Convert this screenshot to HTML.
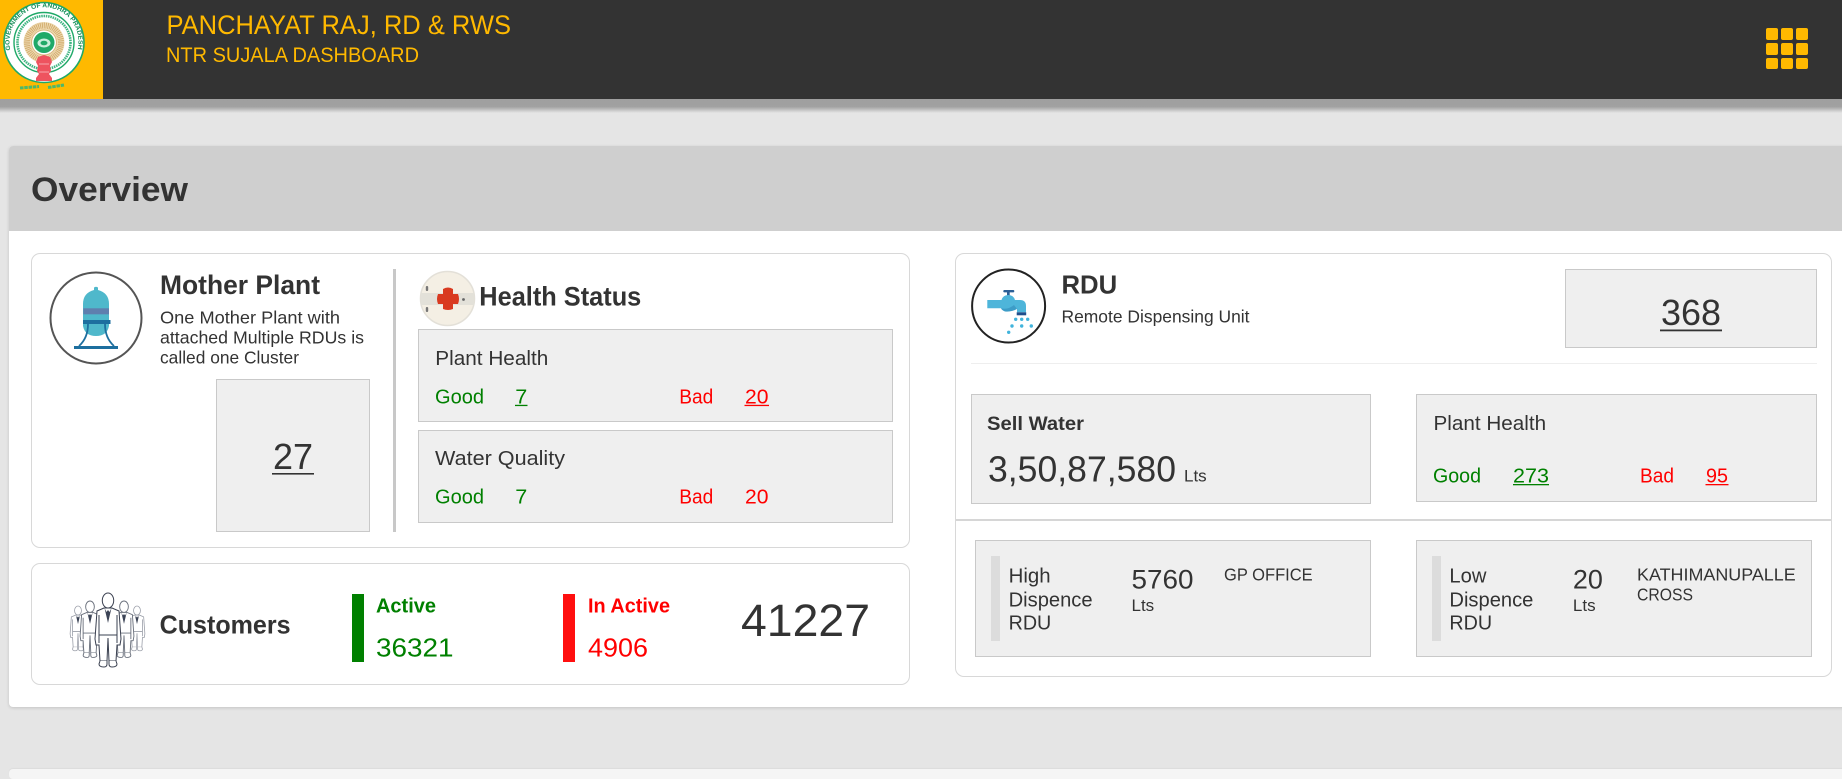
<!DOCTYPE html>
<html lang="en">
<head>
<meta charset="utf-8">
<title>NTR Sujala Dashboard</title>
<style>
html,body{margin:0;padding:0;width:1842px;height:774px;overflow:hidden;background:#e5e5e5;font-family:"Liberation Sans",sans-serif;color:#333}
.a{position:absolute;box-sizing:border-box}
.card{background:#fff;border:1.5px solid #d8d8d8;border-radius:9px}
.box{background:#efefef;border:1.5px solid #c9c9c9}
svg{position:absolute;left:0;top:0}
text{font-family:"Liberation Sans",sans-serif;fill:#333}
.b{font-weight:bold}
.g{fill:#008000}
.r{fill:#ff0000}
.o{fill:#ffb900}
</style>
</head>
<body>
<div class="a" style="left:0;top:99px;width:1842px;height:14px;background:linear-gradient(#9f9f9f 0,#a1a1a1 55%,#e5e5e5 100%)"></div>
<div class="a" style="left:0;top:0;width:1842px;height:99px;background:#333"></div>
<div class="a" style="left:0;top:0;width:103px;height:99px;background:#ffb900"></div>

<div class="a" style="left:9px;top:146px;width:1840px;height:561px;background:#fff;border-radius:4px;box-shadow:0 1px 3px rgba(0,0,0,.15)"></div>
<div class="a" style="left:9px;top:146px;width:1840px;height:85px;background:#cfcfcf;border-radius:4px 4px 0 0"></div>
<div class="a" style="left:9px;top:769px;width:1840px;height:10px;background:#f5f5f5;border-radius:4px;box-shadow:0 -1px 1px rgba(0,0,0,.04)"></div>

<div class="a card" style="left:31px;top:253px;width:879px;height:295px"></div>
<div class="a box" style="left:216px;top:379px;width:154px;height:153px"></div>
<div class="a" style="left:393px;top:269px;width:3px;height:263px;background:#c8c8c8"></div>
<div class="a box" style="left:418px;top:329px;width:475px;height:93px"></div>
<div class="a box" style="left:418px;top:430px;width:475px;height:93px"></div>

<div class="a card" style="left:31px;top:563px;width:879px;height:122px"></div>
<div class="a" style="left:352px;top:594px;width:12px;height:68px;background:#008000"></div>
<div class="a" style="left:563px;top:594px;width:12px;height:68px;background:#ff0f0f"></div>

<div class="a card" style="left:955px;top:253px;width:877px;height:424px"></div>
<div class="a box" style="left:1565px;top:269px;width:252px;height:79px"></div>
<div class="a" style="left:971px;top:363px;width:846px;height:1px;background:#eee"></div>
<div class="a box" style="left:971px;top:394px;width:400px;height:110px"></div>
<div class="a box" style="left:1416px;top:394px;width:401px;height:108px"></div>
<div class="a" style="left:956px;top:519px;width:875px;height:2px;background:#d6d6d6"></div>
<div class="a box" style="left:975px;top:540px;width:396px;height:117px"></div>
<div class="a" style="left:991px;top:556px;width:9px;height:85px;background:#dcdcdc"></div>
<div class="a box" style="left:1416px;top:540px;width:396px;height:117px"></div>
<div class="a" style="left:1432px;top:556px;width:9px;height:85px;background:#dcdcdc"></div>

<svg width="1842" height="774" viewBox="0 0 1842 774">
<defs>
<symbol id="man" viewBox="-14 0 28 76" overflow="visible">
<ellipse cx="0" cy="7.5" rx="5.7" ry="7.5" fill="#fff"/>
<path fill="#fff" d="M-4 15 L-11 18 L-13 46 L-12 52 L-9 52 L-8 68 L-1 68 L0 45 L1 68 L8 68 L9 52 L12 52 L13 46 L11 18 L4 15 Z"/>
<path fill="none" d="M-9 22 L-9 50 M9 22 L9 50 M-8.500 42 H8.500"/>
<path fill="#3c4456" stroke="none" d="M-3.500 15 L0 30 L3.500 15 L1.500 19 L0 17 L-1.500 19 Z"/>
<path fill="#fff" d="M-8 68 L-9 71 Q-9 74 -4 74 Q-1 74 -1 71 L-1 68 M8 68 L9 71 Q9 74 4 74 Q1 74 1 71 L1 68"/>
</symbol>
<path id="ringtextb" fill="none" d="M10.500 50 A34.500 34.500 0 1 1 77.500 50"/>
</defs>

<!-- logo -->
<circle cx="44" cy="42.500" r="40" fill="#fff" stroke="#1fa968" stroke-width="1.600"/>
<text font-size="6.200" font-weight="bold" style="fill:#178f58"><textPath href="#ringtextb" textLength="124" lengthAdjust="spacingAndGlyphs">GOVERNMENT OF ANDHRA PRADESH</textPath></text>
<circle cx="44" cy="42.500" r="30" fill="#fff" stroke="#1fa968" stroke-width="1.400"/>
<circle cx="44" cy="42.500" r="26.500" fill="none" stroke="#3fb582" stroke-width="2.600" stroke-dasharray="1.500 .8"/>
<circle cx="44" cy="42.500" r="20.500" fill="#efdcb4"/>
<circle cx="44" cy="42.500" r="17" fill="none" stroke="#d3ad70" stroke-width="6" stroke-dasharray="1 .9"/>
<circle cx="44" cy="42.500" r="12.500" fill="#fff" stroke="#d9b77f" stroke-width="1"/>
<circle cx="44" cy="42.500" r="10.500" fill="#1fa968"/>
<ellipse cx="44" cy="43" rx="6.500" ry="4.500" fill="#c9eedb"/>
<ellipse cx="44" cy="43" rx="3.500" ry="2.300" fill="#1fa968"/>
<path fill="#ee535f" d="M44 55 L50 57 L52 62 L50 66 L51 71 L49 74 L52 78 L52 81 L36 81 L36 78 L39 74 L37 71 L38 66 L36 62 L38 57 Z"/>
<path fill="none" stroke="#f9c3c6" stroke-width=".7" d="M39 64 H49 M39 72 H49"/>
<path fill="none" stroke="#4db86a" stroke-width="3" stroke-dasharray="3.500 .8" d="M20 88 L39 86.500 M48 87.500 L64 85"/>

<!-- header -->
<text x="166.500" y="34" font-size="27" class="o" textLength="344.500" lengthAdjust="spacingAndGlyphs">PANCHAYAT RAJ, RD &amp; RWS</text>
<text x="166" y="62" font-size="20.800" class="o" textLength="253" lengthAdjust="spacingAndGlyphs">NTR SUJALA DASHBOARD</text>
<g fill="#ffb900">
<rect x="1766" y="28" width="12" height="12" rx="2"/><rect x="1781" y="28" width="12" height="12" rx="2"/><rect x="1796" y="28" width="12" height="12" rx="2"/>
<rect x="1766" y="43" width="12" height="12" rx="2"/><rect x="1781" y="43" width="12" height="12" rx="2"/><rect x="1796" y="43" width="12" height="12" rx="2"/>
<rect x="1766" y="58" width="12" height="11" rx="2"/><rect x="1781" y="58" width="12" height="11" rx="2"/><rect x="1796" y="58" width="12" height="11" rx="2"/>
</g>

<text x="31" y="201" font-size="34" class="b" textLength="157" lengthAdjust="spacingAndGlyphs">Overview</text>

<!-- mother plant icon -->
<circle cx="96" cy="318" r="45.500" fill="#fff" stroke="#555" stroke-width="2"/>
<path fill="#4fb8cb" d="M94 290 V287.500 Q96 286 98 287.500 V290 Q109 293 109 304 V326 Q107 336 96 336 Q85 336 83 326 V304 Q83 293 94 290 Z"/>
<rect x="83.300" y="308.300" width="25.700" height="6" fill="#5f7fae"/>
<rect x="83" y="320" width="27.500" height="4" fill="#1d6f9f"/>
<path fill="none" stroke="#1d6f9f" stroke-width="1.800" d="M88 324 Q88 338 79 346 M105 324 Q105 338 114 346"/>
<rect x="74" y="346" width="44" height="3" fill="#1d6f9f"/>

<text x="160" y="294" font-size="27" class="b" textLength="160" lengthAdjust="spacingAndGlyphs">Mother Plant</text>
<text x="160" y="323.300" font-size="17.500" textLength="180" lengthAdjust="spacingAndGlyphs">One Mother Plant with</text>
<text x="160" y="343.300" font-size="17.500" textLength="204" lengthAdjust="spacingAndGlyphs">attached Multiple RDUs is</text>
<text x="160" y="363.300" font-size="17.500" textLength="139" lengthAdjust="spacingAndGlyphs">called one Cluster</text>
<text x="273" y="469" font-size="36" textLength="40" lengthAdjust="spacingAndGlyphs">27</text>
<rect x="272" y="473" width="42" height="1.600" fill="#333"/>

<!-- health icon -->
<circle cx="447.500" cy="298.500" r="27" fill="#f4efe4" stroke="#e3e0d8" stroke-width="1.500"/>
<path fill="#e3e1d9" d="M421 293 H474 V305 H421 Q420 299 421 293 Z"/>
<path fill="#d93a20" d="M443 289 Q448 286 453 289 V294 H458 Q460 299 458 304 H453 V309 Q448 311 443 309 V304 H438 Q436 299 438 294 H443 Z"/>
<circle cx="463.500" cy="299.500" r="1.400" fill="#666"/>
<rect x="425.800" y="286" width="2.400" height="5" rx="1" fill="#777"/>
<rect x="425.800" y="307" width="2.400" height="5" rx="1" fill="#777"/>

<text x="479.300" y="305.700" font-size="27" class="b" textLength="162" lengthAdjust="spacingAndGlyphs">Health Status</text>
<text x="435.300" y="365" font-size="20.500" textLength="113" lengthAdjust="spacingAndGlyphs">Plant Health</text>
<text x="435" y="403.300" font-size="20.500" class="g" textLength="49" lengthAdjust="spacingAndGlyphs">Good</text>
<text x="515.300" y="403.300" font-size="20.500" class="g" textLength="12" lengthAdjust="spacingAndGlyphs">7</text>
<rect x="515" y="404.800" width="12.500" height="1.300" fill="#008000"/>
<text x="679.300" y="403.300" font-size="20.500" class="r" textLength="34" lengthAdjust="spacingAndGlyphs">Bad</text>
<text x="745" y="403.300" font-size="20.500" class="r" textLength="23.500" lengthAdjust="spacingAndGlyphs">20</text>
<rect x="744.500" y="404.800" width="24.500" height="1.300" fill="#ff0000"/>
<text x="435" y="465" font-size="20.500" textLength="130" lengthAdjust="spacingAndGlyphs">Water Quality</text>
<text x="435" y="503.300" font-size="20.500" class="g" textLength="49" lengthAdjust="spacingAndGlyphs">Good</text>
<text x="515.300" y="503.300" font-size="20.500" class="g" textLength="12" lengthAdjust="spacingAndGlyphs">7</text>
<text x="679.300" y="503.300" font-size="20.500" class="r" textLength="34" lengthAdjust="spacingAndGlyphs">Bad</text>
<text x="745" y="503.300" font-size="20.500" class="r" textLength="23.500" lengthAdjust="spacingAndGlyphs">20</text>

<!-- customers -->
<g stroke="#9a9ea8" stroke-width="1.300">
<use href="#man" x="68" y="606" width="20" height="46"/>
<use href="#man" x="127" y="606" width="20" height="46"/>
</g>
<g stroke="#6a707c" stroke-width="1.200">
<use href="#man" x="79" y="601" width="22" height="58"/>
<use href="#man" x="113" y="601" width="22" height="58"/>
</g>
<g stroke="#3a4050" stroke-width="1">
<use href="#man" x="94" y="593" width="28" height="76"/>
</g>
<text x="159.600" y="633.300" font-size="26" class="b" textLength="131" lengthAdjust="spacingAndGlyphs">Customers</text>
<text x="376" y="612.700" font-size="20.500" class="b g" textLength="60" lengthAdjust="spacingAndGlyphs">Active</text>
<text x="376" y="656.700" font-size="26" class="g" textLength="77.500" lengthAdjust="spacingAndGlyphs">36321</text>
<text x="588" y="612.700" font-size="20.500" class="b r" textLength="82" lengthAdjust="spacingAndGlyphs">In Active</text>
<text x="588" y="656.700" font-size="26" class="r" textLength="60" lengthAdjust="spacingAndGlyphs">4906</text>
<text x="741" y="636" font-size="45" textLength="129" lengthAdjust="spacingAndGlyphs">41227</text>

<!-- faucet icon -->
<circle cx="1008.600" cy="306" r="36.500" fill="#fff" stroke="#222" stroke-width="2"/>
<rect x="1007" y="292" width="2.700" height="6" fill="#2b5f96"/>
<rect x="1003.300" y="290" width="11" height="2.400" rx="1" fill="#2b5f96"/>
<path fill="#4eb5da" d="M987.300 300 H1001.500 Q1003 295 1008.300 295 Q1013.500 295 1015 300 H1020 Q1026 300 1026 306 V312.300 H1017 V309 Q1016 308.300 1014 308.300 Q1011 311.500 1005 311 Q1002 310 1001 308.300 H987.300 Z"/>
<path fill="#3d9cc7" d="M1001 308.300 Q1008 310 1014 305 L1017 309 Q1012 312 1005 311.500 Q1002 310.500 1001 308.300 Z"/>
<rect x="1016.700" y="312.300" width="9.500" height="3" fill="#1f4e8c"/>
<g fill="#41b4dc">
<circle cx="1015.700" cy="319.300" r="1.700"/><circle cx="1021.700" cy="319.300" r="1.700"/><circle cx="1027.700" cy="319.300" r="1.700"/>
<circle cx="1012" cy="326" r="1.700"/><circle cx="1021.700" cy="326" r="1.700"/><circle cx="1031.300" cy="326" r="1.700"/>
<circle cx="1008.700" cy="332.300" r="1.700"/>
</g>

<text x="1061.500" y="293.300" font-size="26" class="b" textLength="55.700" lengthAdjust="spacingAndGlyphs">RDU</text>
<text x="1061.500" y="322.700" font-size="17.500" textLength="188" lengthAdjust="spacingAndGlyphs">Remote Dispensing Unit</text>
<text x="1661" y="325" font-size="36" textLength="60" lengthAdjust="spacingAndGlyphs">368</text>
<rect x="1660" y="329.500" width="62" height="1.800" fill="#333"/>

<text x="987" y="430" font-size="19.500" class="b" textLength="97" lengthAdjust="spacingAndGlyphs">Sell Water</text>
<text x="988" y="481.700" font-size="36" textLength="188" lengthAdjust="spacingAndGlyphs">3,50,87,580</text>
<text x="1184" y="481.700" font-size="17" textLength="22.700" lengthAdjust="spacingAndGlyphs">Lts</text>
<text x="1433.500" y="430" font-size="20.500" textLength="112.600" lengthAdjust="spacingAndGlyphs">Plant Health</text>
<text x="1433" y="482.700" font-size="20.500" class="g" textLength="48" lengthAdjust="spacingAndGlyphs">Good</text>
<text x="1513" y="482.700" font-size="20.500" class="g" textLength="36" lengthAdjust="spacingAndGlyphs">273</text>
<rect x="1513" y="484" width="36" height="1.300" fill="#008000"/>
<text x="1640" y="482.700" font-size="20.500" class="r" textLength="34" lengthAdjust="spacingAndGlyphs">Bad</text>
<text x="1706" y="482.700" font-size="20.500" class="r" textLength="22" lengthAdjust="spacingAndGlyphs">95</text>
<rect x="1705.500" y="484" width="23" height="1.300" fill="#ff0000"/>

<text x="1008.600" y="582.700" font-size="20.500" textLength="42" lengthAdjust="spacingAndGlyphs">High</text>
<text x="1008.600" y="606.700" font-size="20.500" textLength="84" lengthAdjust="spacingAndGlyphs">Dispence</text>
<text x="1008.600" y="629.300" font-size="20.500" textLength="42.700" lengthAdjust="spacingAndGlyphs">RDU</text>
<text x="1131.500" y="588.300" font-size="27" textLength="62" lengthAdjust="spacingAndGlyphs">5760</text>
<text x="1131.500" y="611" font-size="17" textLength="22.700" lengthAdjust="spacingAndGlyphs">Lts</text>
<text x="1224" y="580.700" font-size="17.500" textLength="88.700" lengthAdjust="spacingAndGlyphs">GP OFFICE</text>

<text x="1449.400" y="582.700" font-size="20.500" textLength="37" lengthAdjust="spacingAndGlyphs">Low</text>
<text x="1449.400" y="606.700" font-size="20.500" textLength="84" lengthAdjust="spacingAndGlyphs">Dispence</text>
<text x="1449.400" y="629.300" font-size="20.500" textLength="42.700" lengthAdjust="spacingAndGlyphs">RDU</text>
<text x="1572.900" y="588.300" font-size="27" textLength="30" lengthAdjust="spacingAndGlyphs">20</text>
<text x="1572.900" y="611" font-size="17" textLength="22.700" lengthAdjust="spacingAndGlyphs">Lts</text>
<text x="1637" y="580.700" font-size="17.500" textLength="158.700" lengthAdjust="spacingAndGlyphs">KATHIMANUPALLE</text>
<text x="1637" y="600.700" font-size="17.500" textLength="56" lengthAdjust="spacingAndGlyphs">CROSS</text>
</svg>
</body>
</html>
